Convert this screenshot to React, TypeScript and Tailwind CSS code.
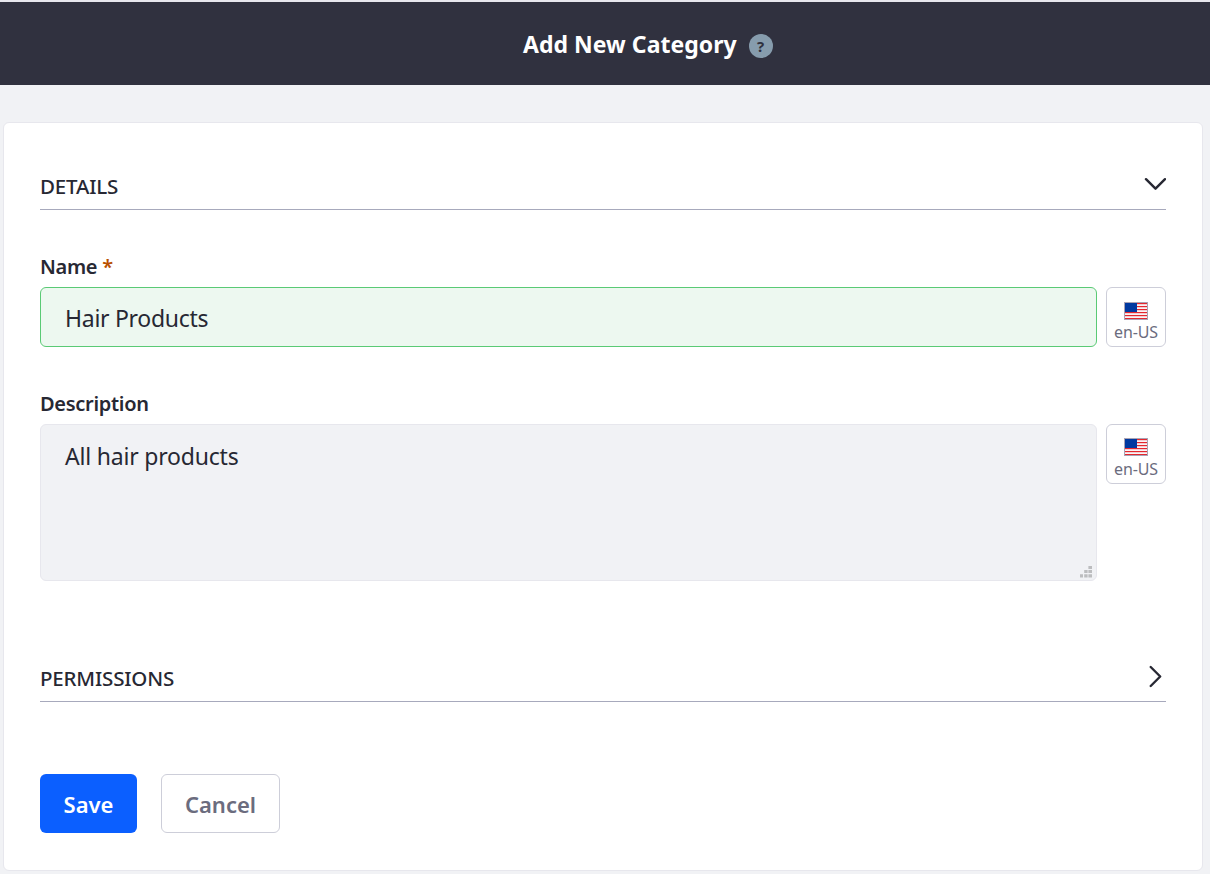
import type { ReactNode } from "react";

function Flag() {
  return (
    <svg width="24" height="18" viewBox="0 0 24 18" className="block shrink-0">
      <rect width="24" height="18" fill="#fbf3f4" />
      {[1, 4, 7, 10, 13, 16].map((y) => (
        <g key={y}>
          <rect x="1" y={y} width="22" height="1" fill="#e4282f" />
          <rect x="1" y={y + 1} width="22" height="1" fill="#f2cdd2" />
        </g>
      ))}
      <rect x="1" y="1" width="12" height="9" fill="#0039a0" />
      <rect x="0.5" y="0.5" width="23" height="17" fill="none" stroke="#a9a3b5" />
    </svg>
  );
}

function LocaleButton({ raised = false }: { raised?: boolean }) {
  return (
    <button
      type="button"
      className={`flex h-[60px] w-[60px] shrink-0 flex-col items-center justify-start rounded-md border border-[#cdced9] bg-white ${raised ? "gap-[3px] pt-[13px]" : "gap-[2px] pt-[14px]"}`}
    >
      <Flag />
      <span className="text-[16px] leading-[20px] tracking-[-0.1px] whitespace-nowrap text-[#6b6c7e]">en-US</span>
    </button>
  );
}

function SectionHeader({ children, open }: { children: ReactNode; open: boolean }) {
  return (
    <div className="flex h-[46px] items-start justify-between border-b border-[#a7a9bc]">
      <h2 className="text-[20.5px] leading-[45px] font-medium tracking-[-0.18px] text-[#272833]">{children}</h2>
      <svg width="22" height="24" viewBox="0 0 22 24" className="mt-[8px]" fill="none" stroke="#272833" strokeWidth="2.4" strokeLinecap="round" strokeLinejoin="round">
        {open ? <path d="M2 7.2 11.5 16.7 21 7.2" /> : <path d="M6.7 3 16.2 12.5 6.7 22" />}
      </svg>
    </div>
  );
}

export default function App() {
  return (
    <div className="flex h-[874px] w-[1210px] flex-col bg-[#f1f2f5] font-['Noto_Sans',sans-serif] text-[#272833]">
      <header className="flex h-[85px] shrink-0 items-center border-t-2 border-[#e7e7ed] bg-[#30313f] pl-[523px]">
        <h1 className="text-[23px] leading-8 font-bold tracking-[0.03px] whitespace-nowrap text-white">Add New Category</h1>
        <span className="mt-[5px] ml-3 flex h-6 w-6 items-center justify-center rounded-full bg-[#869cad] text-[15px] leading-none font-bold text-[#30313f]">
          ?
        </span>
      </header>

      <main className="mt-[37px] ml-[3px] flex h-[749px] w-[1200px] shrink-0 flex-col rounded-md border border-[#e7e7ed] bg-white pt-[41px] pr-9 pl-9">
        <SectionHeader open>DETAILS</SectionHeader>

        <label htmlFor="name" className="mt-[41px] block h-[36px] text-[20px] leading-[31px] font-semibold tracking-[-0.3px]">
          Name <span className="text-[#b95000]">*</span>
        </label>
        <div className="flex gap-[9px]">
          <input
            id="name"
            defaultValue="Hair Products"
            className="h-[60px] w-[1057px] rounded-md border border-[#5aca75] bg-[#edf8f0] px-6 pt-[2px] text-[23px] tracking-[-0.28px] outline-none"
          />
          <LocaleButton />
        </div>

        <label htmlFor="description" className="mt-[41px] block h-[36px] text-[20px] leading-[31px] font-semibold tracking-[-0.3px]">
          Description
        </label>
        <div className="flex items-start gap-[9px]">
          <div className="relative h-[157px] w-[1057px]">
            <textarea
              id="description"
              defaultValue="All hair products"
              className="block h-full w-full resize-none rounded-md border border-[#e7e7ed] bg-[#f1f2f5] px-6 py-[13px] text-[23px] leading-9 tracking-[-0.2px] outline-none"
            />
            <svg className="absolute right-[5px] bottom-[3px]" width="12" height="12" viewBox="0 0 12 12" fill="#bcbdbf">
              <path d="M8.4 0H12v3H8.4zM4.2 4h3.4v3H4.2zM8.4 4H12v3H8.4zM0 8.2h3v3.3H0zM4.2 8.2h3.4v3.3H4.2zM8.4 8.2H12v3.3H8.4z" />
            </svg>
          </div>
          <LocaleButton raised />
        </div>

        <div className="mt-[75px]">
          <SectionHeader open={false}>PERMISSIONS</SectionHeader>
        </div>

        <div className="mt-[72px] flex gap-6">
          <button type="button" className="h-[59px] w-[97px] rounded-md bg-[#0b5fff] pt-[2px] text-[22px] font-semibold text-white">
            Save
          </button>
          <button type="button" className="h-[59px] w-[119px] rounded-md border border-[#cdced9] bg-white pt-[2px] text-[22px] font-semibold text-[#6b6c7e]">
            Cancel
          </button>
        </div>
      </main>
    </div>
  );
}
